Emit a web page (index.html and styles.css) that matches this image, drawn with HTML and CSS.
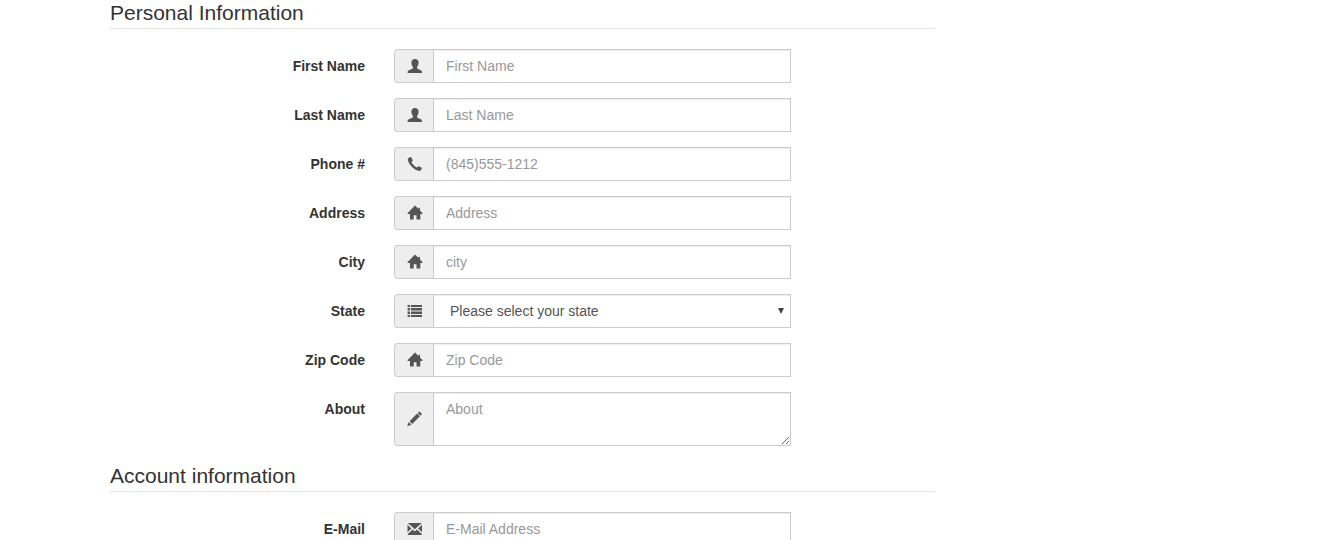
FILE: index.html
```
<!DOCTYPE html>
<html lang="en">
<head>
<meta charset="utf-8">
<title>Registration</title>
<link rel="stylesheet" href="styles.css">
</head>
<body>
<svg class="sprite" aria-hidden="true">
  <symbol id="i-user" viewBox="0 0 14 14"><path d="M7 0C9.200 0 10.600 1.300 10.600 3.500C10.600 5.300 10 6.900 9.100 7.900V9.100C9.100 9.400 9.300 9.600 9.700 9.800L12.700 11.300C13.600 11.700 14 12.200 14 13V14H-.4V13C-.4 12.200 0 11.700.9 11.300L4.300 9.800C4.700 9.600 4.900 9.400 4.900 9.100V7.900C4 6.900 3.400 5.300 3.400 3.500C3.400 1.300 4.800 0 7 0Z"/></symbol>
  <symbol id="i-phone" viewBox="0 0 14 14"><path d="M.6 1.100L2.300 0C2.600-.2 3-.1 3.200.3L4.700 3.200C4.800 3.500 4.800 3.800 4.500 4L3.400 5C3.800 6.200 4.700 7.300 5.700 8.300C6.700 9.300 7.900 10.200 9.100 10.600L10.100 9.500C10.300 9.200 10.600 9.200 10.900 9.300L13.600 10.800C13.900 11 14 11.300 13.800 11.600L12.800 13.200C12.300 13.900 11.500 14 10.700 13.800C8.300 13.200 5.900 11.700 4.100 9.900C2.300 8.100.6 5.700 0 3.400C-.2 2.600-.1 1.700.6 1.100Z"/></symbol>
  <symbol id="i-home" viewBox="0 0 14 14"><path d="M7 -.4L10.600 3.100V1.700H12V4.500L14.600 7.300L14.200 8H12.300V13.600H8.500V9.300H5.700V13.600H2V8H-.2L-.6 7.300Z"/></symbol>
  <symbol id="i-list" viewBox="0 0 14 14"><path d="M-.4 1H2V3H-.4ZM3 1H14V3H3ZM-.4 4H2V6.400H-.4ZM3 4H14V6.400H3ZM-.4 7.400H2V10H-.4ZM3 7.400H14V10H3ZM-.4 11H2V13H-.4ZM3 11H14V13H3Z"/></symbol>
  <symbol id="i-pencil" viewBox="0 0 14 14"><path d="M10.800 0C11.200-.3 11.700-.3 12.100 0L13.500 1.400C13.800 1.800 13.800 2.300 13.500 2.700L12.500 3.700L9.800 1ZM9.200 1.600L11.900 4.300L4.300 11.900L1.600 9.200ZM.8 10L3.500 12.700L-.9 14.200Z"/></symbol>
  <symbol id="i-mail" viewBox="0 0 14 14"><path d="M-.2 1H13.800L6.800 7.300ZM-.5 2.700L3.400 6.500L-.5 10.300ZM14 2.700V10.300L10.100 6.500ZM4.700 7.400L6.800 9.400L8.900 7.400L13.800 12V13H-.2V12Z"/></symbol>
</svg>
<form class="form">
  <fieldset class="section">
    <legend class="section-title">Personal Information</legend>
    <div class="row">
      <label class="label" for="first">First Name</label>
      <div class="group"><span class="addon"><svg class="icon"><use href="#i-user"/></svg></span><input class="control" id="first" type="text" placeholder="First Name"></div>
    </div>
    <div class="row">
      <label class="label" for="last">Last Name</label>
      <div class="group"><span class="addon"><svg class="icon"><use href="#i-user"/></svg></span><input class="control" id="last" type="text" placeholder="Last Name"></div>
    </div>
    <div class="row">
      <label class="label" for="phone">Phone #</label>
      <div class="group"><span class="addon"><svg class="icon"><use href="#i-phone"/></svg></span><input class="control" id="phone" type="text" placeholder="(845)555-1212"></div>
    </div>
    <div class="row">
      <label class="label" for="address">Address</label>
      <div class="group"><span class="addon"><svg class="icon"><use href="#i-home"/></svg></span><input class="control" id="address" type="text" placeholder="Address"></div>
    </div>
    <div class="row">
      <label class="label" for="city">City</label>
      <div class="group"><span class="addon"><svg class="icon"><use href="#i-home"/></svg></span><input class="control" id="city" type="text" placeholder="city"></div>
    </div>
    <div class="row">
      <label class="label" for="state">State</label>
      <div class="group"><span class="addon"><svg class="icon"><use href="#i-list"/></svg></span><select class="control select" id="state"><option>Please select your state</option></select><svg class="arrow" viewBox="0 0 6 6"><path d="M0 0H6L3 6Z"/></svg></div>
    </div>
    <div class="row">
      <label class="label" for="zip">Zip Code</label>
      <div class="group"><span class="addon"><svg class="icon"><use href="#i-home"/></svg></span><input class="control" id="zip" type="text" placeholder="Zip Code"></div>
    </div>
    <div class="row">
      <label class="label" for="about">About</label>
      <div class="group"><span class="addon"><svg class="icon"><use href="#i-pencil"/></svg></span><textarea class="control" id="about" rows="2" placeholder="About"></textarea></div>
    </div>
  </fieldset>
  <fieldset class="section">
    <legend class="section-title">Account information</legend>
    <div class="row">
      <label class="label" for="email">E-Mail</label>
      <div class="group"><span class="addon"><svg class="icon"><use href="#i-mail"/></svg></span><input class="control" id="email" type="email" placeholder="E-Mail Address"></div>
    </div>
  </fieldset>
</form>
</body>
</html>
```
FILE: styles.css
```
* { box-sizing: border-box; }
body {
  margin: 0;
  height: 100vh;
  overflow: hidden;
  background: #fff;
  color: #333;
  font: 14px/20px "Liberation Sans", Arial, sans-serif;
}
.sprite { display: none; }
.form {
  max-width: 825px;
  margin-left: 110px;
}
.section {
  min-width: 0;
  margin: 0 0 2px;
  padding: 0;
  border: 0;
}
.section-title {
  width: 100%;
  margin-bottom: 20px;
  padding: 0 0 2px;
  border-bottom: 1px solid #e5e5e5;
  font-size: 21px;
  line-height: 26px;
}
.row {
  display: grid;
  grid-template-columns: minmax(0, 255fr) minmax(0, 397fr) minmax(0, 115fr);
  column-gap: 29px;
  margin-bottom: 15px;
}
.label {
  padding-top: 7px;
  font-weight: bold;
  text-align: right;
}
.group {
  position: relative;
  display: flex;
}
.addon {
  display: flex;
  flex: none;
  align-items: center;
  padding: 0 11px 0 13px;
  border: 1px solid #ccc;
  border-right: 0;
  border-radius: 4px 0 0 4px;
  background: #eee;
  color: #555;
}
.icon {
  width: 14px;
  height: 14px;
  overflow: visible;
  fill: currentColor;
}
symbol { overflow: visible; }
.control {
  flex: 1;
  min-width: 0;
  min-height: 34px;
  margin: 0;
  padding: 6px 12px;
  border: 1px solid #ccc;
  border-radius: 0;
  background: #fff;
  box-shadow: inset 0 1px 1px rgba(0, 0, 0, .075);
  color: #555;
  font: inherit;
}
.control::placeholder { color: #999; opacity: 1; }
.control:focus { outline: 0; border-color: #66afe9; }
.select {
  appearance: none;
  padding: 6px 16px;
}
.arrow {
  position: absolute;
  top: 14px;
  right: 7px;
  width: 6px;
  height: 6px;
  fill: #444;
  pointer-events: none;
}
```
